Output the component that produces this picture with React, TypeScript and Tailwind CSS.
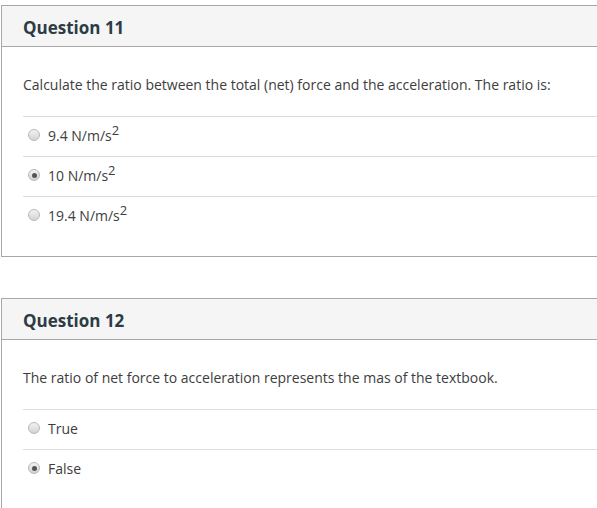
import React from "react";

type Option = { label: React.ReactNode; checked?: boolean };

function Radio({ checked }: { checked?: boolean }) {
  return (
    <span className="relative inline-flex h-[12px] w-[12px] shrink-0 items-center justify-center rounded-full border border-[#b9b9b9] bg-[linear-gradient(180deg,#f2f2f2,#d3d3d3)]">
      {checked && <span className="h-[5px] w-[5px] rounded-full bg-[#555]" />}
    </span>
  );
}

function Unit({ value }: { value: string }) {
  return (
    <>
      {value} N/m/s<sup className="top-[-6px] text-[13px]">2</sup>
    </>
  );
}

function QuestionCard({ title, text, options }: { title: string; text: string; options: Option[] }) {
  return (
    <div className="border border-r-0 border-[#a8a8a8] bg-white">
      <div className="flex h-[41px] items-center border-b border-[#a8a8a8] bg-[#f5f5f5] pl-[21px] pt-[3px]">
        <h2 className="text-[17px] font-bold text-[#2d3b45]">{title}</h2>
      </div>
      <div className="pl-[21px] pb-[20px]">
        <p className="pt-[28px] pb-[21px] text-[14px] leading-[20px] text-[#3d3d3d]">{text}</p>
        {options.map((o, i) => (
          <div key={i} className="flex h-[40px] items-center gap-[8px] border-t border-[#dcdcdc] pl-[5px] pb-[3px] text-[14px] text-[#3d3d3d]">
            <Radio checked={o.checked} />
            <span>{o.label}</span>
          </div>
        ))}
      </div>
    </div>
  );
}

export default function App() {
  return (
    <div className="h-[508px] w-[597px] overflow-hidden bg-white pt-[5px] pl-[1px] font-['Open_Sans',sans-serif]">
      <QuestionCard
        title="Question 11"
        text="Calculate the ratio between the total (net) force and the acceleration. The ratio is:"
        options={[
          { label: <Unit value="9.4" /> },
          { label: <Unit value="10" />, checked: true },
          { label: <Unit value="19.4" /> },
        ]}
      />
      <div className="h-[41px]" />
      <QuestionCard
        title="Question 12"
        text="The ratio of net force to acceleration represents the mas of the textbook."
        options={[{ label: "True" }, { label: "False", checked: true }]}
      />
    </div>
  );
}
